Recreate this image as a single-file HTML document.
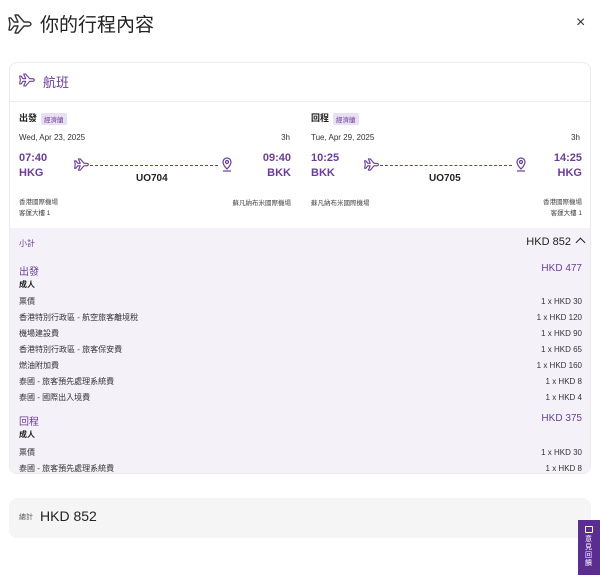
<!DOCTYPE html><html><head><meta charset="utf-8"><style>
*{margin:0;padding:0;box-sizing:border-box}
body{width:600px;height:585px;background:#fff;font-family:"Liberation Sans","Noto Sans CJK TC",sans-serif;color:#222;position:relative;overflow:hidden}
.a{position:absolute;white-space:nowrap}
.p{color:#6b3d97}
.s{font-size:8px;color:#333}
.r{text-align:right}
.badge{display:inline-block;background:#e9dff3;color:#6b3d97;font-size:6.5px;padding:1px 3px;border-radius:2px;vertical-align:middle;margin-left:4px;font-weight:normal}
.dash{position:absolute;border-top:1px dashed #6b3d97;height:0}
</style></head><body>
<svg class="a" style="left:8px;top:14px" width="24" height="20" viewBox="0 0 24 20" fill="none" stroke="#333" stroke-width="1.4" stroke-linejoin="round"><path d="M1 4h2l3 4h4l-3-7h3l6 7h4c2 0 3 1 3 2s-1 2-3 2h-4l-6 7h-3l3-7h-4l-3 4h-2l1-6z"/></svg>
<div class="a" style="left:40px;top:10px;font-size:19px;color:#222">你的行程內容</div>
<div class="a" style="left:576px;top:14px;font-size:16px;color:#333">×</div>

<div class="a" style="left:9px;top:62px;width:582px;height:412px;border:1px solid #ececec;border-radius:8px;overflow:hidden">
<div class="a" style="left:0;top:38px;width:582px;border-top:1px solid #eee"></div>
<div class="a" style="left:0;top:165px;width:582px;height:250px;background:#f4f2f8"></div>
</div>
<svg class="a" style="left:19px;top:73px" width="16" height="14" viewBox="0 0 24 20" fill="none" stroke="#6b3d97" stroke-width="1.6" stroke-linejoin="round"><path d="M1 4h2l3 4h4l-3-7h3l6 7h4c2 0 3 1 3 2s-1 2-3 2h-4l-6 7h-3l3-7h-4l-3 4h-2l1-6z"/></svg>
<div class="a p" style="left:43px;top:72px;font-size:13px">航班</div>

<div class="a" style="left:19px;top:111px;font-size:9px;font-weight:bold">出發<span class="badge">經濟艙</span></div>
<div class="a s" style="left:19px;top:133px">Wed, Apr 23, 2025</div>
<div class="a s r" style="left:260px;top:133px;width:30px">3h</div>
<div class="a p" style="left:19px;top:151px;font-size:11px;font-weight:bold;line-height:15px">07:40<br>HKG</div>
<div class="a p r" style="left:240px;top:151px;width:51px;font-size:11px;font-weight:bold;line-height:15px">09:40<br>BKK</div>
<svg class="a" style="left:74px;top:158px" width="15" height="13" viewBox="0 0 24 20" fill="none" stroke="#6b3d97" stroke-width="1.8" stroke-linejoin="round"><path d="M1 4h2l3 4h4l-3-7h3l6 7h4c2 0 3 1 3 2s-1 2-3 2h-4l-6 7h-3l3-7h-4l-3 4h-2l1-6z"/></svg>
<div class="dash" style="left:90px;top:165px;width:128px"></div>
<svg class="a" style="left:221px;top:157px" width="12" height="16" viewBox="0 0 12 16" fill="none" stroke="#6b3d97" stroke-width="1.2"><path d="M6 12C3 9 2 7 2 5a4 4 0 018 0c0 2-1 4-4 7z"/><circle cx="6" cy="5" r="1.5"/><path d="M2 14h8"/></svg>
<div class="a" style="left:136px;top:173px;font-size:10px;font-weight:bold">UO704</div>
<div class="a" style="left:19px;top:197px;font-size:6.5px;color:#444;line-height:11px">香港國際機場<br>客運大樓 1</div>
<div class="a r" style="left:190px;top:197px;width:101px;font-size:6.5px;color:#444">蘇凡納布米國際機場</div>

<div class="a" style="left:311px;top:111px;font-size:9px;font-weight:bold">回程<span class="badge">經濟艙</span></div>
<div class="a s" style="left:311px;top:133px">Tue, Apr 29, 2025</div>
<div class="a s r" style="left:550px;top:133px;width:30px">3h</div>
<div class="a p" style="left:311px;top:151px;font-size:11px;font-weight:bold;line-height:15px">10:25<br>BKK</div>
<div class="a p r" style="left:530px;top:151px;width:52px;font-size:11px;font-weight:bold;line-height:15px">14:25<br>HKG</div>
<svg class="a" style="left:364px;top:158px" width="15" height="13" viewBox="0 0 24 20" fill="none" stroke="#6b3d97" stroke-width="1.8" stroke-linejoin="round"><path d="M1 4h2l3 4h4l-3-7h3l6 7h4c2 0 3 1 3 2s-1 2-3 2h-4l-6 7h-3l3-7h-4l-3 4h-2l1-6z"/></svg>
<div class="dash" style="left:380px;top:165px;width:132px"></div>
<svg class="a" style="left:515px;top:157px" width="12" height="16" viewBox="0 0 12 16" fill="none" stroke="#6b3d97" stroke-width="1.2"><path d="M6 12C3 9 2 7 2 5a4 4 0 018 0c0 2-1 4-4 7z"/><circle cx="6" cy="5" r="1.5"/><path d="M2 14h8"/></svg>
<div class="a" style="left:429px;top:173px;font-size:10px;font-weight:bold">UO705</div>
<div class="a" style="left:311px;top:197px;font-size:6.5px;color:#444">蘇凡納布米國際機場</div>
<div class="a r" style="left:500px;top:197px;width:82px;font-size:6.5px;color:#444;line-height:11px">香港國際機場<br>客運大樓 1</div>

<div class="a p" style="left:19px;top:238px;font-size:8px">小計</div>
<div class="a" style="left:500px;top:236px;width:84px;font-size:11px;color:#222;text-align:right">HKD 852 <span style="display:inline-block;width:7px;height:7px;border-left:1.4px solid #222;border-top:1.4px solid #222;transform:rotate(45deg);margin-left:3px;position:relative;top:1px"></span></div>
<div class="a p" style="left:19px;top:263px;font-size:10px">出發</div>
<div class="a p r" style="left:500px;top:263px;width:82px;font-size:10px">HKD 477</div>
<div class="a" style="left:19px;top:279px;font-size:8px;font-weight:bold">成人</div>
<div class="a s" style="left:19px;top:294px;line-height:16px">票價<br>香港特別行政區 - 航空旅客離境稅<br>機場建設費<br>香港特別行政區 - 旅客保安費<br>燃油附加費<br>泰國 - 旅客預先處理系統費<br>泰國 - 國際出入境費</div>
<div class="a s r" style="left:480px;top:294px;width:102px;line-height:16px">1 x HKD 30<br>1 x HKD 120<br>1 x HKD 90<br>1 x HKD 65<br>1 x HKD 160<br>1 x HKD 8<br>1 x HKD 4</div>
<div class="a p" style="left:19px;top:413px;font-size:10px">回程</div>
<div class="a p r" style="left:500px;top:413px;width:82px;font-size:10px">HKD 375</div>
<div class="a" style="left:19px;top:429px;font-size:8px;font-weight:bold">成人</div>
<div class="a s" style="left:19px;top:445px;line-height:16px">票價<br>泰國 - 旅客預先處理系統費</div>
<div class="a s r" style="left:480px;top:445px;width:102px;line-height:16px">1 x HKD 30<br>1 x HKD 8</div>

<div class="a" style="left:9px;top:498px;width:582px;height:40px;background:#f5f5f5;border-radius:8px"></div>
<div class="a" style="left:19px;top:512px;font-size:7px;color:#555">總計</div>
<div class="a" style="left:40px;top:508px;font-size:14px;color:#222">HKD 852</div>

<div class="a" style="left:578px;top:520px;width:22px;height:55px;background:#5c2d91"></div>
<div class="a" style="left:585px;top:526px;width:8px;height:7px;border:1px solid #fff;border-radius:1px"></div>
<div class="a" style="left:585px;top:536px;width:8px;font-size:7px;color:#fff;line-height:8px;white-space:normal">意見回饋</div>
</body></html>
